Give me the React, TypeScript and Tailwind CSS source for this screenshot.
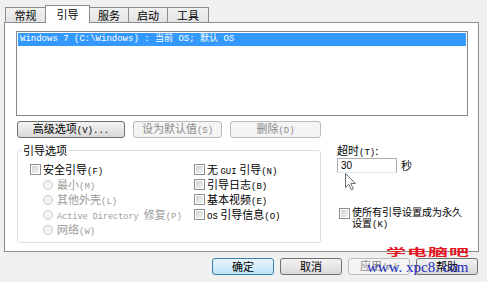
import React from "react";

function K({ children }: { children: React.ReactNode }) {
  return <span className="font-['Liberation_Mono',monospace] text-[9px] leading-none">{children}</span>;
}

function Box() {
  return (
    <span className="block w-[11px] h-[11px] shrink-0 border border-[#8e8f8f] bg-white p-px">
      <span className="block w-full h-full bg-linear-to-br from-[#cdd0d4] to-[#f4f4f4]" />
    </span>
  );
}

function Radio() {
  return <span className="block w-[10px] h-[10px] shrink-0 rounded-full border border-[#cacaca] bg-[#f3f3f3]" />;
}

function Tab({ label, active, w }: { label: string; active?: boolean; w: string }) {
  if (active) {
    return (
      <div className={`${w} -ml-px relative z-10 mb-[-1px] h-[18px] border border-b-0 border-[#898c95] bg-white flex justify-center pt-[1px] text-[11px] leading-[14px]`}>
        {label}
      </div>
    );
  }
  return (
    <div className={`${w} -ml-px first:ml-0 h-[15px] border border-b-0 border-[#898c95] bg-linear-to-b from-[#f2f2f2] to-[#e3e3e3] flex justify-center text-[11px] leading-[14px]`}>
      {label}
    </div>
  );
}

function Btn({ children, w, off, main }: { children: React.ReactNode; w: string; off?: boolean; main?: boolean }) {
  const look = off
    ? "border-[#b9bcbf] bg-[#f4f4f4] text-[#8b8b8b]"
    : main
    ? "border-[#3c7fb1] bg-linear-to-b from-[#eaf6fd] to-[#c0e2f5]"
    : "border-[#707070] bg-linear-to-b from-[#f3f3f3] to-[#d9d9d9]";
  return (
    <div className={`${w} h-[17px] rounded-[3px] border ${look} flex items-center justify-center text-[11px] leading-none`}>
      <span>{children}</span>
    </div>
  );
}

function Row({ children, radio }: { children: React.ReactNode; radio?: boolean }) {
  return (
    <div className={`h-[15px] flex items-center ${radio ? "gap-[4px] pl-[13px]" : "gap-[2px]"}`}>
      {radio ? <Radio /> : <Box />}
      <span className="leading-[15px]">{children}</span>
    </div>
  );
}

export default function App() {
  return (
    <div className="relative w-[487px] h-[282px] overflow-hidden bg-[#f0f0f0] text-black font-['Noto_Sans_CJK_SC',sans-serif]">
      {/* tabs */}
      <div className="flex items-end h-[22px] pl-[5px]">
        <Tab label="常规" w="w-[41px]" />
        <Tab label="引导" w="w-[45px]" active />
        <Tab label="服务" w="w-[40px]" />
        <Tab label="启动" w="w-[40px]" />
        <Tab label="工具" w="w-[42px]" />
      </div>

      {/* panel */}
      <div className="ml-[4px] w-[475px] h-[230px] border border-[#898c95] bg-white pl-[11px] pt-[8px]">
        <div className="w-[452px] h-[85px] border border-[#828790] p-px">
          <div className="h-[13px] bg-[#3399ff] text-white pl-[2px] text-[9px] leading-[13px] font-['Liberation_Mono','Noto_Sans_CJK_SC',monospace] whitespace-pre">
            {"Windows 7 (C:\\Windows) : 当前 OS; 默认 OS"}
          </div>
        </div>

        <div className="flex gap-[8px] mt-[5px] ml-px">
          <Btn w="w-[108px]">高级选项<K>(V)...</K></Btn>
          <Btn w="w-[89px]" off>设为默认值<K>(S)</K></Btn>
          <Btn w="w-[91px]" off>删除<K>(D)</K></Btn>
        </div>

        <div className="flex items-start mt-[5px]">
          <fieldset className="ml-px w-[304px] h-[100px] rounded-[3px] border border-[#d5dfe5]">
            <legend className="ml-[4px] px-px text-[11px] leading-[14px]">引导选项</legend>
            <div className="flex pt-[5px] text-[11px]">
              <div className="w-[176px] pl-[12px] flex flex-col">
                <Row>安全引导<K>(F)</K></Row>
                <div className="text-[#9a9a9a]">
                  <Row radio>最小<K>(M)</K></Row>
                  <Row radio>其他外壳<K>(L)</K></Row>
                  <Row radio>
                    <span className="font-['Liberation_Mono',monospace] text-[8.5px] leading-none">Active Directory </span>修复<K>(P)</K>
                  </Row>
                  <Row radio>网络<K>(W)</K></Row>
                </div>
              </div>
              <div className="flex flex-col">
                <Row>无 <K>GUI</K> 引导<K>(N)</K></Row>
                <Row>引导日志<K>(B)</K></Row>
                <Row>基本视频<K>(E)</K></Row>
                <Row><K>OS</K> 引导信息<K>(O)</K></Row>
              </div>
            </div>
          </fieldset>

          <div className="ml-[16px] flex flex-col text-[11px]">
            <div className="h-[14px] leading-[14px]">超时<K>(T)</K>:</div>
            <div className="flex items-center mt-px">
              <div className="w-[60px] h-[15px] border border-[#abadb3] border-b-[#e3e9ef] bg-white pl-[3px] text-[10px] leading-[13px] font-['Liberation_Sans',sans-serif]">30</div>
              <span className="ml-[4px] leading-[15px]">秒</span>
            </div>
            <div className="flex items-start gap-[2px] mt-[33px] pl-[2px]">
              <span className="mt-[2px]"><Box /></span>
              <span className="w-[114px] text-[10px] leading-[11px]">使所有引导设置成为永久设置<K>(K)</K></span>
            </div>
          </div>
        </div>
      </div>

      {/* dialog buttons */}
      <div className="flex justify-end gap-[6px] pr-[9px] mt-[6px]">
        <Btn w="w-[62px]" main>确定</Btn>
        <Btn w="w-[62px]">取消</Btn>
        <Btn w="w-[62px]" off>应用<K>(A)</K></Btn>
        <Btn w="w-[62px]">帮助</Btn>
      </div>

      {/* mouse pointer */}
      <svg className="absolute left-[345px] top-[173px]" width="12" height="18" viewBox="0 0 12 18">
        <path d="M0.5 0.5 L0.5 14.5 L3.8 11.3 L6.3 16.8 L8.3 15.9 L5.9 10.5 L10.5 10.5 Z" fill="#fff" stroke="#6b6f78" strokeWidth="1" />
      </svg>

      {/* watermark */}
      <div className="absolute left-[386px] top-[247px] text-[20px] leading-[20px] font-bold text-[#e3161f] tracking-[1px] scale-y-50 origin-top">
        学电脑吧
      </div>
      <div className="absolute left-[367px] top-[259px] text-[15px] leading-[16px] text-[#1f2fc0] font-['Liberation_Serif',serif] whitespace-pre">
        {"www. xpc8. com"}
      </div>
    </div>
  );
}
